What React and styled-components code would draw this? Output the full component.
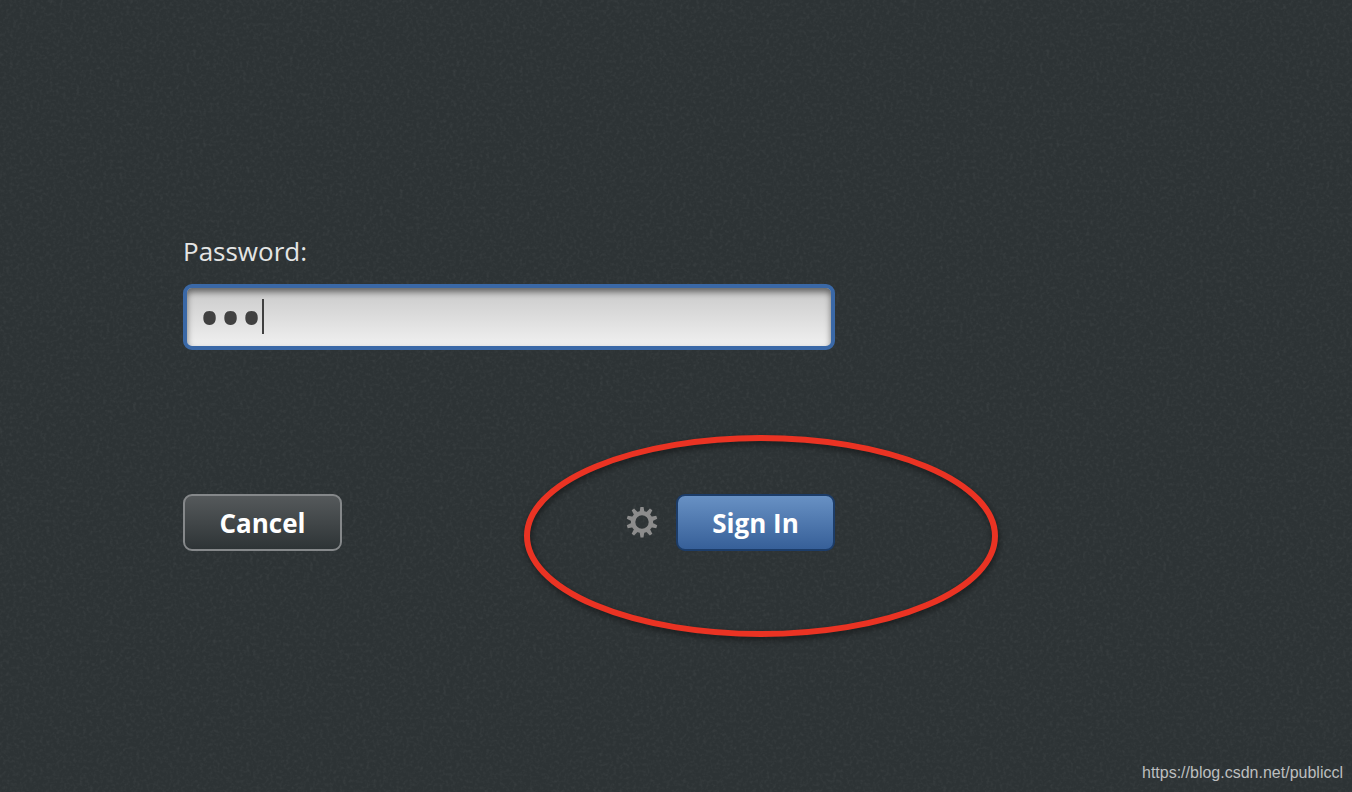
import React, { useState } from 'react'
import styled, { createGlobalStyle } from 'styled-components'

const GlobalStyle = createGlobalStyle`
  * {
    box-sizing: border-box;
  }
  body {
    margin: 0;
    background: #2d3335;
    font-family: 'Open Sans', 'Noto Sans', sans-serif;
  }
`

const App = () => {
  const [password, setPassword] = useState('abc')

  return (
    <Page>
      <GlobalStyle />
      <Grain aria-hidden="true">
        <filter id="grain" x="0" y="0" width="100%" height="100%">
          <feTurbulence type="fractalNoise" baseFrequency="0.3" numOctaves="2" seed="4" />
          <feColorMatrix values="0 0 0 0 1  0 0 0 0 1  0 0 0 0 1  0.6 0.6 0 0 -0.54" />
        </filter>
        <rect width="100%" height="100%" filter="url(#grain)" />
      </Grain>
      <LoginForm onSubmit={(e) => e.preventDefault()}>
        <Label htmlFor="password">Password:</Label>
        <Field>
          <PasswordInput
            id="password"
            type="password"
            autoComplete="off"
            value={password}
            onChange={(e) => setPassword(e.target.value)}
          />
          <Caret />
        </Field>
        <Actions>
          <Button type="button">Cancel</Button>
          <SignInGroup>
            <SessionButton type="button" aria-label="Session">
              <GearIcon />
            </SessionButton>
            <Button type="submit" $primary>Sign In</Button>
            <Ellipse viewBox="0 0 480 212" aria-hidden="true">
              <ellipse cx="240" cy="105" rx="234" ry="98" />
            </Ellipse>
          </SignInGroup>
        </Actions>
      </LoginForm>
      <Footer>
        <a href="https://blog.csdn.net/publiccl">https://blog.csdn.net/publiccl</a>
      </Footer>
    </Page>
  )
}

const GearIcon = () => (
  <svg viewBox="-16 -15 32 32" width="32" height="32" aria-hidden="true">
    <circle r="8.9" fill="none" stroke="currentColor" strokeWidth="4.4" />
    {[0, 36, 72, 108, 144, 180, 216, 252, 288, 324].map((angle) => (
      <path key={angle} d="M-2.4 -10 L-1.5 -15.5 H1.5 L2.4 -10 Z" fill="currentColor" transform={`rotate(${angle})`} />
    ))}
  </svg>
)

const Page = styled.main`
  position: relative;
  display: flex;
  flex-direction: column;
  justify-content: space-between;
  min-height: 100vh;
  overflow: hidden;
`

const Grain = styled.svg`
  position: absolute;
  inset: 0;
  width: 100%;
  height: 100%;
  opacity: 0.12;
  pointer-events: none;
`

const LoginForm = styled.form`
  position: relative;
  display: flex;
  flex-direction: column;
  width: 100%;
  max-width: 835px;
  padding: 231px 0 0 183px;
`

const Label = styled.label`
  color: #e4e5e5;
  font-size: 26px;
  line-height: 40px;
`

const Field = styled.div`
  position: relative;
  margin-top: 13px;
`

const PasswordInput = styled.input`
  display: block;
  width: 100%;
  height: 66px;
  padding: 0 12px;
  border: 4px solid #3a68a6;
  border-radius: 9px;
  outline: none;
  color: #404040;
  caret-color: transparent;
  background: linear-gradient(#c9c9c9, #f0f0f0);
  box-shadow: inset 0 4px 6px rgba(0, 0, 0, 0.5);
  font-family: 'Noto Sans', sans-serif;
  font-size: 56px;
`

const Caret = styled.span`
  position: absolute;
  top: 15px;
  left: 79px;
  width: 2px;
  height: 35px;
  background: #404040;
`

const Actions = styled.div`
  display: flex;
  align-items: center;
  justify-content: space-between;
  margin-top: 144px;
`

const SignInGroup = styled.div`
  position: relative;
  display: flex;
  align-items: center;
  gap: 18px;
`

const Button = styled.button`
  width: 159px;
  height: 57px;
  padding: 0;
  border: 2px solid ${(props) => (props.$primary ? '#1c3c68' : '#85888a')};
  border-radius: 9px;
  color: #ffffff;
  background: ${(props) =>
    props.$primary ? 'linear-gradient(#6891c4, #365f98)' : 'linear-gradient(#55595b, #2e3436)'};
  font-family: inherit;
  font-size: 26px;
  font-weight: 700;
  line-height: 40px;
  cursor: pointer;
`

const SessionButton = styled.button`
  display: flex;
  padding: 0;
  border: none;
  color: #8c8c8c;
  background: none;
  cursor: pointer;
`

// red marker drawn round the sign in controls
const Ellipse = styled.svg`
  position: absolute;
  top: -63px;
  right: -166px;
  width: 480px;
  height: 212px;
  overflow: visible;
  pointer-events: none;
  filter: drop-shadow(1px 3px 3px rgba(0, 0, 0, 0.5));

  ellipse {
    fill: none;
    stroke: #ea3323;
    stroke-width: 6;
  }
`

const Footer = styled.footer`
  position: relative;
  padding: 0 9px 7px;
  text-align: right;
  font-family: 'Liberation Sans', Arial, sans-serif;
  font-size: 16px;
  line-height: 24px;

  a {
    color: #bcbebf;
    text-decoration: none;
  }
`

export default App
